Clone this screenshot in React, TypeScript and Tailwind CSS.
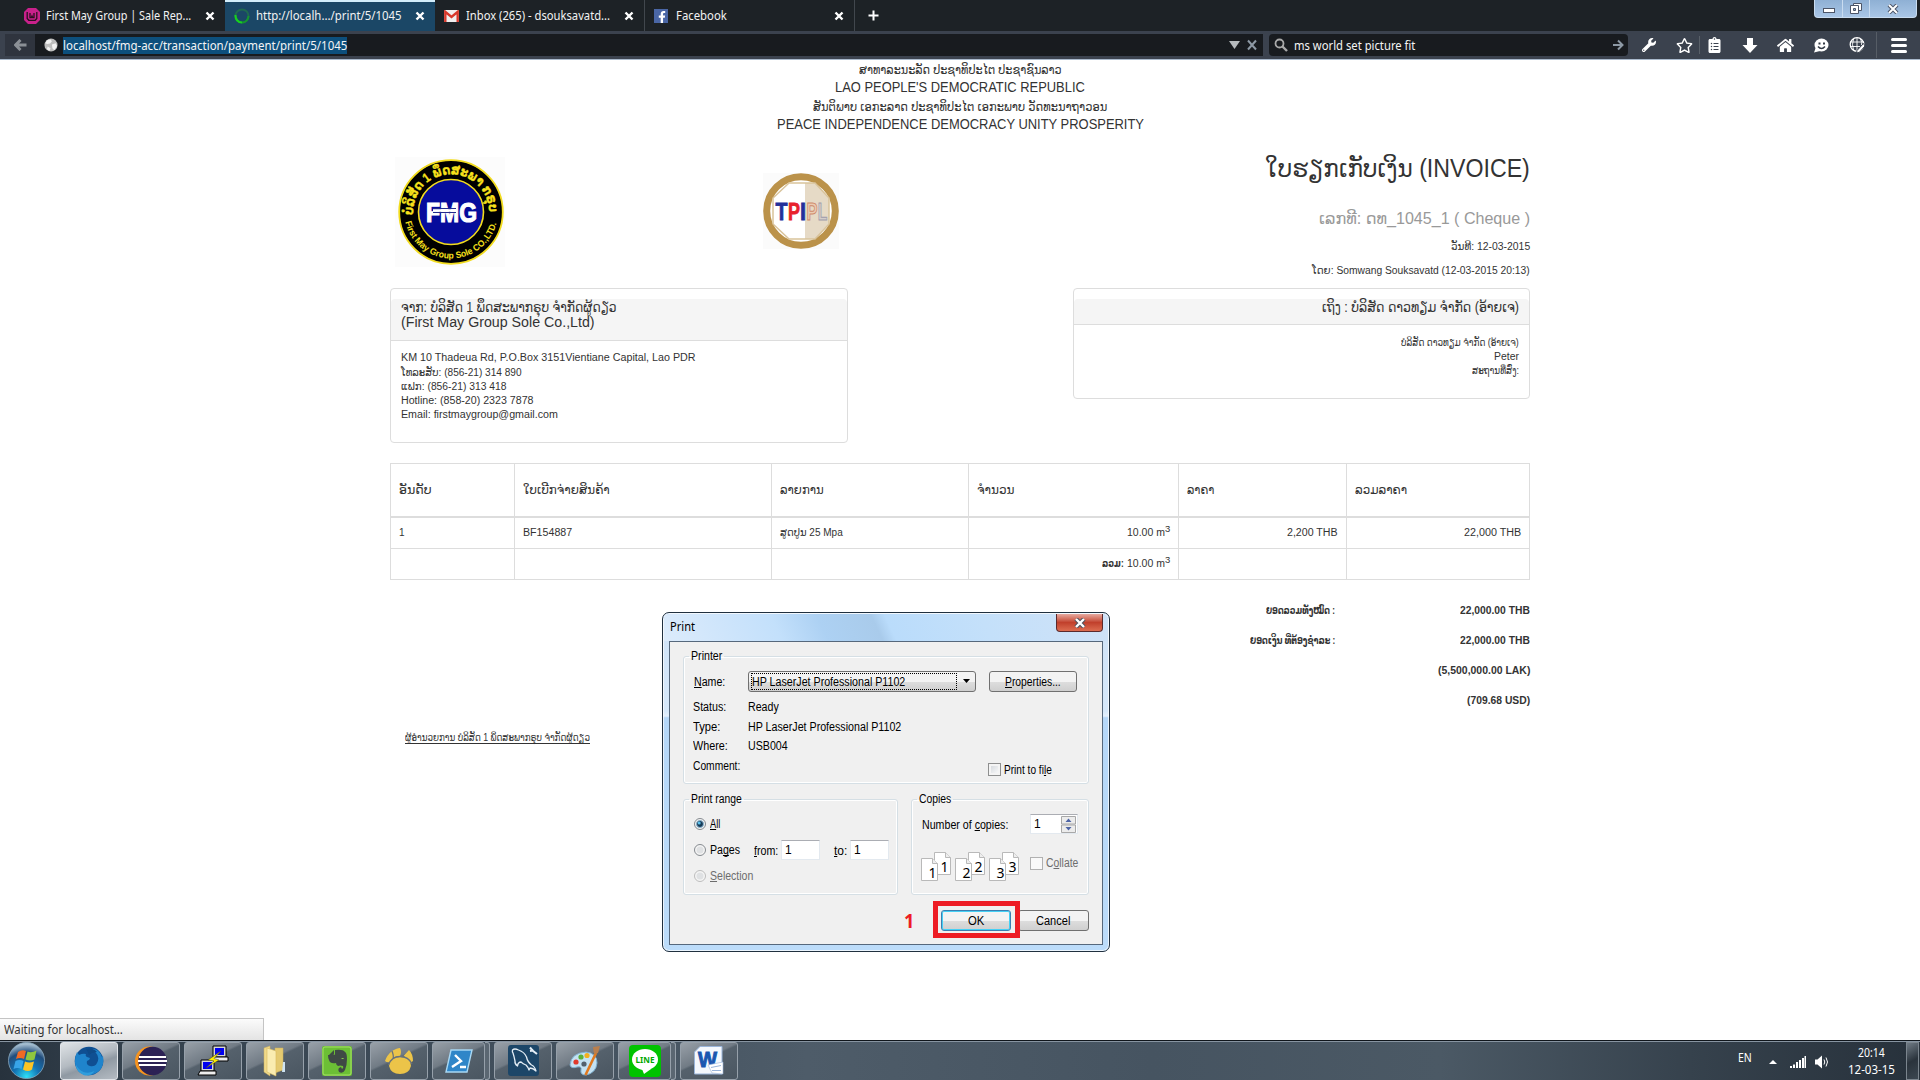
import React, { useLayoutEffect, useRef, useState } from "react";
import { FaWrench, FaRegStar, FaClipboardList, FaHome, FaFacebookF } from "react-icons/fa";

const UI = "font-['Noto_Sans','DejaVu_Sans',sans-serif]";
const DOC = "font-['Liberation_Sans','DejaVu_Sans',sans-serif]";

/** Single line of text, condensed or widened horizontally to occupy exactly `w` pixels. */
function Fit({ w, className = "", children }: { w: number; className?: string; children: React.ReactNode }) {
  const ref = useRef<HTMLSpanElement>(null);
  const [scale, setScale] = useState(1);
  useLayoutEffect(() => {
    if (ref.current && ref.current.offsetWidth > 0) setScale(w / ref.current.offsetWidth);
  }, [w]);
  return (
    <span className={`inline-block whitespace-nowrap text-left ${className}`} style={{ width: w }}>
      <span ref={ref} className="inline-block origin-left" style={{ transform: `scaleX(${scale})` }}>
        {children}
      </span>
    </span>
  );
}

const TabClose = () => (
  <svg width="10" height="10" viewBox="0 0 10 10" className="shrink-0">
    <path d="M1.5 1.5l7 7M8.5 1.5l-7 7" stroke="#fff" strokeWidth="2.4" />
  </svg>
);

function Tab({ icon, label, w, active, line }: { icon: React.ReactNode; label: string; w: number; active?: boolean; line?: boolean }) {
  return (
    <div
      className={`flex h-[31px] w-[210px] items-center pl-[9px] pr-[10px] text-[12px] text-[#f2f2f2] ${
        active ? "border-t-2 border-[#d3eefb] bg-[#1b4766] pb-[2px]" : line ? "border-r border-[#41474d]" : ""
      }`}
    >
      <span className="flex w-[22px] shrink-0 items-center">{icon}</span>
      <Fit w={w}>{label}</Fit>
      <span className="ml-auto flex">
        <TabClose />
      </span>
    </div>
  );
}

function Browser() {
  return (
    <header className={`flex flex-col ${UI}`}>
      <div className="flex h-[31px] items-center bg-[#1d2226] pl-[15px]">
        <Tab
          label="First May Group | Sale Rep..."
          w={145}
          icon={
            <svg width="16" height="16" viewBox="0 0 16 16">
              <path d="M4 0h8l4 4v8l-4 4H4l-4-4V4z" fill="#c9218b" />
              <path d="M3.2 4v6.500l1.600 1.800h6.400l1.600-1.800V4M6 5v4.500h1.400L8 8l.6 1.500H10V5" fill="none" stroke="#2a0f20" strokeWidth="1.300" />
            </svg>
          }
        />
        <Tab
          active
          label="http://localh.../print/5/1045"
          w={146}
          icon={
            <svg width="16" height="16" viewBox="0 0 16 16">
              <circle cx="8" cy="8" r="6.500" fill="none" stroke="#1f6a50" strokeWidth="2" />
              <path d="M8 14.500A6.500 6.500 0 0 1 1.600 7" fill="none" stroke="#18d020" strokeWidth="2.200" />
              <path d="M8 14.500A6.500 6.500 0 0 0 14.500 8" fill="none" stroke="#14962f" strokeWidth="2" />
            </svg>
          }
        />
        <Tab
          line
          label="Inbox (265) - dsouksavatd..."
          w={144}
          icon={
            <svg width="15" height="12" viewBox="0 0 15 12">
              <rect width="15" height="12" rx="1" fill="#f1efee" />
              <path d="M1.300 12V1.800L7.500 7l6.200-5.200V12" fill="none" stroke="#d8382b" strokeWidth="2.400" />
            </svg>
          }
        />
        <Tab
          line
          label="Facebook"
          w={51}
          icon={
            <span className="flex h-[14px] w-[14px] items-end justify-end bg-[#4a66a5] text-[12px] text-white">
              <FaFacebookF />
            </span>
          }
        />
        <svg width="11" height="11" viewBox="0 0 11 11" className="ml-[13px]">
          <path d="M5.500 0.500v10M0.500 5.500h10" stroke="#fff" strokeWidth="2" />
        </svg>
        <div className="mb-auto ml-auto mr-[3px] flex h-[18px] w-[103px] overflow-hidden rounded-b border border-t-0 border-[#c9dcf0] bg-gradient-to-b from-[#8fb0d4] to-[#a9c6e6]">
          <span className="flex w-[28px] items-center justify-center border-r border-[#c9dcf0]">
            <span className="mt-1 h-[5px] w-[12px] border border-[#4c5568] bg-white" />
          </span>
          <span className="flex w-[27px] items-center justify-center border-r border-[#c9dcf0]">
            <svg width="12" height="11" viewBox="0 0 12 11">
              <path d="M3.500.5h8v7h-8z" fill="#fff" stroke="#4c5568" />
              <path d="M.5 2.500h8v8h-8z" fill="#fff" stroke="#4c5568" />
              <path d="M3.500 5.500h2v2h-2z" fill="#8fb0d4" stroke="#4c5568" />
            </svg>
          </span>
          <span className="flex flex-1 items-center justify-center">
            <svg width="12" height="10" viewBox="0 0 12 10">
              <path d="M2 1l8 8M10 1L2 9" stroke="#4c5568" strokeWidth="4" />
              <path d="M2 1l8 8M10 1L2 9" stroke="#fff" strokeWidth="2" />
            </svg>
          </span>
        </div>
      </div>
      <div className="flex h-[29px] items-center border-b border-[#a9b9cc] bg-[#3b424e] pl-[5px] text-[12px] text-[#f4f4f4]">
        <span className="flex h-[22px] w-[30px] items-center justify-center bg-[#2f343e]">
          <svg width="13" height="12" viewBox="0 0 13 12">
            <path d="M6.500 1L1.500 6l5 5M2 6h10.500" fill="none" stroke="#8b9096" strokeWidth="3" />
          </svg>
        </span>
        <div className="flex h-[22px] w-[1228px] items-center bg-[#181b1f] pl-[9px] pr-[6px]">
          <svg width="14" height="14" viewBox="0 0 15 15" className="mr-[5px]">
            <circle cx="7.500" cy="7.500" r="7" fill="#bdbdbd" />
            <path d="M3 2.500l4-1 1.500 2-2 2.500-3 .5-2-1zM8.500 7l4-1.500 1.500 3-3 4.500-2-2zM4 9l3 2-1 3-3-2z" fill="#f2f2f2" />
          </svg>
          <span className="mt-px flex h-[17px] bg-[#0d4f7c] leading-[17px]">
            <Fit w={284}>localhost/fmg-acc/transaction/payment/print/5/1045</Fit>
          </span>
          <svg width="28" height="12" viewBox="0 0 28 12" className="ml-auto">
            <path d="M0 2h11L5.500 10z" fill="#b5b9bd" />
            <path d="M19 1.500l8 9M27 1.500l-8 9" stroke="#8d99a5" strokeWidth="2" />
          </svg>
        </div>
        <div className="ml-[6px] flex h-[22px] w-[359px] items-center rounded-sm bg-[#181b1f] pl-[5px] pr-[4px]">
          <svg width="14" height="14" viewBox="0 0 14 14" className="mr-[6px]">
            <circle cx="5.500" cy="5.500" r="4" fill="none" stroke="#a9a9a9" strokeWidth="1.800" />
            <path d="M8.500 8.500l4.500 4.500" stroke="#a9a9a9" strokeWidth="2.400" />
          </svg>
          <Fit w={121} className="pt-[2px]">ms world set picture fit</Fit>
          <svg width="12" height="12" viewBox="0 0 12 12" className="ml-auto">
            <path d="M1 6h9M6 1.500L10.500 6 6 10.500" fill="none" stroke="#8d99a5" strokeWidth="2" />
          </svg>
        </div>
        <div className="flex items-center text-white">
          <FaWrench className="ml-[14px] text-[14px]" />
          <FaRegStar className="ml-[20px] text-[17px]" />
          <span className="ml-[6px] h-[18px] w-px bg-[#596069]" />
          <FaClipboardList className="ml-[7px] w-[15px] text-[16px]" />
          <svg width="16" height="15" viewBox="0 0 16 15" className="ml-[20px]">
            <path d="M5 0h6v7h4.500L8 15 .5 7H5z" fill="#fff" />
          </svg>
          <FaHome className="ml-[19px] text-[17px]" />
          <svg width="16" height="15" viewBox="0 0 16 15" className="ml-[19px]">
            <ellipse cx="8.500" cy="7" rx="7" ry="6.500" fill="#fff" />
            <path d="M3 9L1 14.500 7 13z" fill="#fff" />
            <path d="M5.500 5.500h2M10 5.500h2" stroke="#333a45" strokeWidth="1.800" />
            <path d="M5 8.500q3.500 4 7 0" fill="none" stroke="#333a45" strokeWidth="1.500" />
          </svg>
          <svg width="16" height="16" viewBox="0 0 16 16" className="ml-[20px]">
            <circle cx="8" cy="7.500" r="6.800" fill="none" stroke="#fff" strokeWidth="1.300" />
            <path d="M1 5h14M1 9.500h10M8 1v13M4.500 2q-2 5.500 0 11M11.500 2q2 4 1 6" fill="none" stroke="#fff" strokeWidth=".9" />
            <path d="M14.500 6.500L8 13.500 7.500 16l3-.8L16 9z" fill="#fff" stroke="#3b424e" />
          </svg>
          <span className="ml-[11px] h-[26px] w-px bg-[#565d66]" />
          <span className="ml-[14px] flex w-[16px] flex-col gap-[3px]">
            <span className="h-[3px] rounded bg-white" />
            <span className="h-[3px] rounded bg-white" />
            <span className="h-[3px] rounded bg-white" />
          </span>
        </div>
      </div>
    </header>
  );
}

const FmgLogo = () => (
  <svg width="110" height="110" viewBox="0 0 110 110" className={DOC}>
    <rect width="110" height="110" fill="#fcfcfc" />
    <defs>
      <path id="arcTop" d="M18.300 60A38 38 0 1 1 93.700 60" />
      <path id="arcBottom" d="M9.500 60A46.800 46.800 0 0 0 102.500 60" />
    </defs>
    <circle cx="56" cy="55" r="51.800" fill="#000" stroke="#f2dc1e" strokeWidth="1.800" />
    <circle cx="56" cy="55" r="32.500" fill="#060c9c" stroke="#f2dc1e" strokeWidth="1.600" />
    <text fontSize="13" fontWeight="700" fill="#f7e11c" stroke="#f7e11c" strokeWidth=".4">
      <textPath href="#arcTop" startOffset="2" textLength="122" lengthAdjust="spacingAndGlyphs">
        ບໍລິສັດ 1 ພຶດສະພາ ກຣຸບ
      </textPath>
    </text>
    <text fontSize="9" fontWeight="700" fill="#f7e11c">
      <textPath href="#arcBottom" startOffset="5" textLength="125" lengthAdjust="spacingAndGlyphs">
        First May Group Sole CO.,LTD.
      </textPath>
    </text>
    <text x="31" y="64.500" fontSize="28" fontWeight="700" fill="#fff" stroke="#fff" strokeWidth="1.200" textLength="51" lengthAdjust="spacingAndGlyphs">
      FMG
    </text>
    <path d="M38 51.500h23M38 55.500h23" stroke="#222a8c" strokeWidth="1" />
    <path d="M38 53.500h23" stroke="#fff" strokeWidth="2.600" />
  </svg>
);

const TpiplLogo = () => (
  <svg width="76" height="76" viewBox="0 0 76 76" className={DOC}>
    <rect width="76" height="76" fill="#fbfbfb" />
    <circle cx="38" cy="38" r="34.300" fill="#fff" stroke="#bb924a" strokeWidth="7" />
    <path d="M42 10h10l14 15v26L52 66H42z" fill="#e6dac6" />
    <path d="M26 10h26l14 15v26L52 66H26L10 51V25z" fill="none" stroke="#d9c39b" strokeWidth="1.500" />
    <g fontSize="24" fontWeight="700">
      <text x="12.500" y="47" textLength="12" lengthAdjust="spacingAndGlyphs" fill="#23309a" stroke="#23309a" strokeWidth=".8">T</text>
      <text x="25" y="47" textLength="12" lengthAdjust="spacingAndGlyphs" fill="#e8202c" stroke="#e8202c" strokeWidth=".8">P</text>
      <text x="37" y="47" textLength="6" lengthAdjust="spacingAndGlyphs" fill="#23309a" stroke="#23309a" strokeWidth=".8">I</text>
      <text x="43.500" y="47" textLength="11" lengthAdjust="spacingAndGlyphs" fill="#ebcbb3" stroke="#cf8a6a" strokeWidth="1">P</text>
      <text x="54.800" y="47" textLength="9.500" lengthAdjust="spacingAndGlyphs" fill="#d3cdca" stroke="#9f9cab" strokeWidth="1">L</text>
    </g>
  </svg>
);

const CUBIC = (
  <>
    10.00 m<sup className="relative top-[-4px] align-baseline text-[9px] leading-none">3</sup>
  </>
);

const columns: { label: string; w: number; width: string }[] = [
  { label: "ອັນດັບ", w: 33, width: "w-[124px]" },
  { label: "ໃບເບີກຈ່າຍສິນຄ້າ", w: 87, width: "w-[257px]" },
  { label: "ລາຍການ", w: 44, width: "w-[197px]" },
  { label: "ຈຳນວນ", w: 38, width: "w-[210px]" },
  { label: "ລາຄາ", w: 27, width: "w-[168px]" },
  { label: "ລວມລາຄາ", w: 52, width: "w-[183px]" },
];

const totals = [
  { label: "ຍອດລວມທັງໝົດ :", lw: 69, value: "22,000.00 THB", w: 70 },
  { label: "ຍອດເງິນ ທີ່ຕ້ອງຊຳລະ :", lw: 85, value: "22,000.00 THB", w: 70 },
  { label: "", lw: 0, value: "(5,500,000.00 LAK)", w: 92 },
  { label: "", lw: 0, value: "(709.68 USD)", w: 63 },
];

function Invoice() {
  const cell = "border border-[#ddd] px-[8px]";
  return (
    <main className={`mx-auto flex w-[1140px] flex-col text-[10px] leading-[14px] text-[#333] ${DOC}`}>
      <div className="flex flex-col items-center pt-px text-[14px]">
        <Fit w={203} className="h-[17px] text-[13px] leading-[18px]">ສາທາລະນະລັດ ປະຊາທິປະໄຕ ປະຊາຊົນລາວ</Fit>
        <Fit w={250} className="h-[19px] leading-[18px]">LAO PEOPLE'S DEMOCRATIC REPUBLIC</Fit>
        <Fit w={294} className="h-[18px] text-[13px] leading-[20px]">ສັນຕິພາບ ເອກະລາດ ປະຊາທິປະໄຕ ເອກະພາບ ວັດທະນາຖາວອນ</Fit>
        <Fit w={367} className="h-[18px] leading-[18px]">PEACE INDEPENDENCE DEMOCRACY UNITY PROSPERITY</Fit>
      </div>

      <div className="flex h-[155px]">
        <div className="pl-[5px] pt-[24px]"><FmgLogo /></div>
        <div className="pl-[258px] pt-[40px]"><TpiplLogo /></div>
        <div className="ml-auto flex flex-col items-end pt-[19px]">
          <Fit w={265} className="text-[25px] leading-[32px]">ໃບຮຽກເກັບເງິນ (INVOICE)</Fit>
          <Fit w={211} className="mt-[23px] text-[16px] leading-[24px] text-[#999]">ເລກທີ: ດທ_1045_1 ( Cheque )</Fit>
          <Fit w={79} className="mt-[9px]">ວັນທີ: 12-03-2015</Fit>
          <Fit w={218} className="mt-[10px]">ໂດຍ: Somwang Souksavatd (12-03-2015 20:13)</Fit>
        </div>
      </div>

      <div className="flex items-start justify-between">
        <section className="flex h-[155px] w-[458px] flex-col rounded border border-[#ddd]">
          <div className="mt-[10px] flex h-[42px] flex-col rounded-t border-b border-[#ddd] bg-[#f5f5f5] px-[10px] text-[14px] leading-[15px]">
            <Fit w={216} className="pt-px">ຈາກ: ບໍລິສັດ 1 ພຶດສະພາກຣຸບ ຈຳກັດຜູ້ດຽວ</Fit>
            <Fit w={194}>(First May Group Sole Co.,Ltd)</Fit>
          </div>
          <div className="flex flex-col px-[10px] pt-[10px] leading-[14px]">
            <Fit w={295}>KM 10 Thadeua Rd, P.O.Box 3151Vientiane Capital, Lao PDR</Fit>
            <Fit w={121} className="pt-px">ໂທລະສັບ: (856-21) 314 890</Fit>
            <Fit w={105}>ແຟກ: (856-21) 313 418</Fit>
            <Fit w={133}>Hotline: (858-20) 2323 7878</Fit>
            <Fit w={157}>Email: firstmaygroup@gmail.com</Fit>
          </div>
        </section>
        <section className="flex h-[111px] w-[457px] flex-col rounded border border-[#ddd]">
          <div className="mt-[10px] flex h-[26px] flex-col items-end rounded-t border-b border-[#ddd] bg-[#f5f5f5] px-[10px] text-[14px] leading-[16px]">
            <Fit w={197}>ເຖິງ : ບໍລິສັດ ດາວທຽມ ຈຳກັດ (ອ້າຍເຈ)</Fit>
          </div>
          <div className="flex flex-col items-end px-[10px] pt-[11px]">
            <Fit w={118}>ບໍລິສັດ ດາວທຽມ ຈຳກັດ (ອ້າຍເຈ)</Fit>
            <Fit w={25}>Peter</Fit>
            <Fit w={47}>ສະຖານທີ່ສົ່ງ:</Fit>
          </div>
        </section>
      </div>

      <table className="mt-[20px] w-[1139px] table-fixed border-collapse text-left">
        <thead>
          <tr className="h-[53px]">
            {columns.map((c) => (
              <th key={c.label} className={`${cell} ${c.width} border-b-2 text-[13px] font-normal`}>
                <Fit w={c.w} className="mt-px">{c.label}</Fit>
              </th>
            ))}
          </tr>
        </thead>
        <tbody>
          <tr className="h-[32px]">
            <td className={cell}>1</td>
            <td className={cell}><Fit w={49}>BF154887</Fit></td>
            <td className={cell}><Fit w={63}>ສູດປູນ 25 Mpa</Fit></td>
            <td className={`${cell} text-right`}><Fit w={43}>{CUBIC}</Fit></td>
            <td className={`${cell} text-right`}><Fit w={51}>2,200 THB</Fit></td>
            <td className={`${cell} text-right`}><Fit w={57}>22,000 THB</Fit></td>
          </tr>
          <tr className="h-[31px]">
            <td className={cell} />
            <td className={cell} />
            <td className={cell} />
            <td className={`${cell} text-right`}>
              <span className="inline-flex items-baseline gap-[3px]">
                <b><Fit w={22}>ລວມ:</Fit></b>
                <Fit w={43}>{CUBIC}</Fit>
              </span>
            </td>
            <td className={cell} />
            <td className={cell} />
          </tr>
        </tbody>
      </table>

      <div className="mt-[16px] flex flex-col font-bold">
        {totals.map((t, i) => (
          <div key={i} className="flex h-[30px] items-center">
            <span className="flex w-[945px] justify-end">{t.label && <Fit w={t.lw}>{t.label}</Fit>}</span>
            <span className="ml-auto flex"><Fit w={t.w}>{t.value}</Fit></span>
          </div>
        ))}
      </div>
      <div className="ml-[15px] mt-[15px]">
        <Fit w={185} className="h-[13px] border-b border-[#333]">ຜູ້ອຳນວຍການ ບໍລິສັດ 1 ພຶດສະພາກຣຸບ ຈຳກັດຜູ້ດຽວ</Fit>
      </div>
    </main>
  );
}

const K = ({ children }: { children: string }) => <span className="underline decoration-1 underline-offset-[1px] [text-decoration-skip-ink:none]">{children}</span>;

function Row({ label, w, value, vw }: { label: React.ReactNode; w: number; value?: string; vw?: number }) {
  return (
    <div className="flex h-[19.500px] items-center">
      <span className="flex w-[55px]"><Fit w={w}>{label}</Fit></span>
      {value && vw ? <Fit w={vw}>{value}</Fit> : null}
    </div>
  );
}

function Radio({ on, dim }: { on?: boolean; dim?: boolean }) {
  return (
    <svg width="12" height="12" viewBox="0 0 12 12" className="mr-[4px] shrink-0">
      <circle cx="6" cy="6" r="5.500" fill="#f4f4f4" stroke={dim ? "#bcbcbc" : "#858a8f"} />
      <circle cx="6" cy="6" r="3.500" fill={on ? "#173b57" : "#dfe1e3"} stroke={on ? "#8bb4cf" : "none"} />
      {on && <circle cx="5.200" cy="5" r="1.500" fill="#5cc3ee" />}
    </svg>
  );
}

const winButton = "flex h-[21px] items-center justify-center rounded-[3px] border border-[#707070] bg-gradient-to-b from-[#f3f3f3] from-50% via-[#dedede] via-50% to-[#cfcfcf]";
const field = "flex h-[20px] items-center border border-[#e3e9ef] border-t-[#abadb3] bg-white pl-[3px]";
const group = "rounded-[3px] border border-[#d5dfe5] pl-[10px] shadow-[inset_0_0_0_1px_#fff]";

const Sheets = ({ n }: { n: string }) => (
  <svg width="31" height="30" viewBox="0 0 31 30" className={UI}>
    <path d="M13.500.5h11l5 5v17h-16z" fill="#fff" stroke="#b9b9b9" />
    <path d="M24.500.5v5h5" fill="#eee" stroke="#b9b9b9" />
    <text x="19.500" y="19.500" fontSize="14" fill="#000">{n}</text>
    <path d="M.5 6.500h11l5 5v17H.5z" fill="#fff" stroke="#b9b9b9" />
    <path d="M11.500 6.500v5h5" fill="#eee" stroke="#b9b9b9" />
    <text x="7.500" y="25.500" fontSize="14" fill="#000">{n}</text>
  </svg>
);

function PrintDialog() {
  return (
    <div className="absolute left-[662px] top-[612px] flex h-[340px] w-[448px] flex-col rounded-[7px] border border-[#20303f] bg-[linear-gradient(180deg,#cfe3f8_0%,#d6e8fa_29%,#e4f0fc_30.500%,#b5d7f8_31%,#bcdcfa_100%)] px-[6px] text-[12px] leading-[15px] text-black shadow-[inset_0_0_0_1px_rgba(255,255,255,.7)] font-['Liberation_Sans',sans-serif]">
      <div className="-mx-[5px] mt-px flex h-[27px] items-center rounded-t-[6px] bg-[linear-gradient(65deg,#dcebfb_0%,#c3e0fb_26%,#add1f3_36%,#a9cbeb_48%,#badcfb_51%,#c4e0fa_72%,#cfe2f7_100%)] pl-[6px]">
        <Fit w={25} className={`pb-[2px] text-[12px] ${UI}`}>Print</Fit>
        <span className="mb-auto ml-auto mr-[5px] flex h-[18px] w-[47px] items-center justify-center rounded-b-[4px] border border-t-0 border-[#5b2a2c] bg-gradient-to-b from-[#e6a9a0] to-[#dc6c50] via-[#c1402c] via-50%">
          <svg width="12" height="10" viewBox="0 0 12 10">
            <path d="M2 1l8 8M10 1L2 9" stroke="#50525e" strokeWidth="4.400" />
            <path d="M2 1l8 8M10 1L2 9" stroke="#fff" strokeWidth="2.400" />
          </svg>
        </span>
      </div>
      <div className="flex h-[304px] flex-col border border-[#56687c] bg-[#f0f0f0] pl-[13px] pt-[6px]">
        <fieldset className={`${group} h-[136px] w-[406px]`}>
          <legend className="-ml-[5px] h-[16px] px-[2px]"><Fit w={31} className="pt-px">Printer</Fit></legend>
          <div className="mt-[6px] flex h-[22px] items-center">
            <span className="flex w-[54px]"><Fit w={31} className="pt-[2px]"><K>N</K>ame:</Fit></span>
            <div className={`${winButton} w-[228px] pl-[2px]`}>
              <span className="flex h-[17px] w-[206px] items-center border border-dotted border-black"><Fit w={153} className="pt-[2px]">HP LaserJet Professional P1102</Fit></span>
              <svg width="7" height="4" viewBox="0 0 7 4" className="mx-auto"><path d="M0 0h7L3.500 4z" /></svg>
            </div>
            <div className={`${winButton} ml-[13px] w-[88px]`}><Fit w={56} className="pt-[2px]"><K>P</K>roperties...</Fit></div>
          </div>
          <div className="-ml-px mt-[6px]">
            <Row label="Status:" w={33} value="Ready" vw={31} />
            <Row label="Type:" w={27} value="HP LaserJet Professional P1102" vw={153} />
            <Row label="Where:" w={35} value="USB004" vw={40} />
            <div className="flex">
              <Row label="Comment:" w={47} />
              <div className="ml-[240px] flex items-center pt-[5px]">
                <span className="mr-[3px] h-[13px] w-[13px] border border-[#8e8f8f] bg-gradient-to-br from-[#cfd3d8] to-white shadow-[inset_0_0_0_2px_#f4f4f4]" />
                <Fit w={48} className="pt-px">Print to fi<K>l</K>e</Fit>
              </div>
            </div>
          </div>
        </fieldset>
        <div className="mt-[7px] flex gap-[13px]">
          <fieldset className={`${group} h-[104px] w-[215px]`}>
            <legend className="-ml-[5px] h-[16px] px-[2px]"><Fit w={51} className="pt-px">Print range</Fit></legend>
            <div className="mt-[4px] flex h-[26px] items-center"><Radio on /><Fit w={10}><K>A</K>ll</Fit></div>
            <div className="flex h-[26px] items-center">
              <Radio /><Fit w={30}>Pa<K>g</K>es</Fit>
              <Fit w={24} className="ml-[14px] pt-[2px]"><K>f</K>rom:</Fit>
              <span className={`${field} ml-[3px] w-[39px]`}>1</span>
              <Fit w={13} className="ml-[14px] pt-[2px]"><K>t</K>o:</Fit>
              <span className={`${field} ml-[3px] w-[39px]`}>1</span>
            </div>
            <div className="flex h-[26px] items-center text-[#6d6d6d]"><Radio dim /><Fit w={43}><K>S</K>election</Fit></div>
          </fieldset>
          <fieldset className={`${group} h-[104px] w-[178px]`}>
            <legend className="-ml-[5px] h-[16px] px-[2px]"><Fit w={32} className="pt-px">Copies</Fit></legend>
            <div className="mt-[4px] flex h-[26px] items-center">
              <Fit w={86} className="pt-[2px]">Number of <K>c</K>opies:</Fit>
              <span className={`${field} ml-[22px] w-[48px] justify-between pr-px`}>
                1
                <svg width="15" height="17" viewBox="0 0 15 17">
                  <path d="M.5.5h14v7.500H.5zM.5 9h14v7.500H.5z" fill="#ececec" stroke="#a8a8a8" />
                  <path d="M7.500 2.500L10.500 6h-6zM7.500 14.500l3-3.500h-6z" fill="#4d64a5" />
                </svg>
              </span>
            </div>
            <div className="mt-[15px] flex items-start">
              <span className="-ml-px flex gap-[3px]"><Sheets n="1" /><Sheets n="2" /><Sheets n="3" /></span>
              <span className="ml-[10px] mt-[4px] flex items-center text-[#6d6d6d]">
                <span className="mr-[3px] h-[13px] w-[13px] border border-[#b1b1b1] bg-[#f9f9f9]" />
                <Fit w={32}>C<K>o</K>llate</Fit>
              </span>
            </div>
          </fieldset>
        </div>
        <div className="mt-[15px] flex items-center pl-[221px]">
          <Fit w={10} className={`text-[20px] font-bold leading-[20px] text-[#ed1c24] ${UI}`}>1</Fit>
          <span className="relative ml-[27px] flex">
            <span className={`${winButton} w-[70px] !border-[#3c7fb1] pr-px shadow-[inset_0_0_0_1px_#46d0f5]`}><Fit w={16} className="pt-px">OK</Fit></span>
            <span className="absolute -left-[8px] -top-[9px] z-10 h-[37px] w-[87px] border-[5px] border-[#ed1c24]" />
          </span>
          <span className={`${winButton} ml-[7px] w-[71px] pr-[2px]`}><Fit w={34} className="pt-px">Cancel</Fit></span>
        </div>
      </div>
    </div>
  );
}

const taskIcons: { icon: React.ReactNode; active?: boolean; stack?: boolean }[] = [
  {
    active: true,
    icon: (
      <svg width="32" height="32" viewBox="0 0 32 32">
        <circle cx="16" cy="16" r="14.300" fill="#0f4f92" />
        <path d="M4 7l2 3q4-2 7-1-1 2 1 3l3 1q0 2-3 3-1 4 3 5 5 1 7-3 3-6-1-10-2-3-5-4Q26 3 29 12l1-1q2 12-7 17-9 5-17-1Q-1 19 4 7z" fill="#1f84cc" />
        <path d="M2.500 19q3 6 8 8t11-1q-4 6-11 4-7-3-8-11z" fill="#2f9ddc" />
        <path d="M13 4q7-2 11 3l-5 1-3 2q-1-3-3-6z" fill="#0e4a88" />
      </svg>
    ),
  },
  {
    icon: (
      <svg width="34" height="30" viewBox="0 0 34 30">
        <circle cx="15.500" cy="15" r="14.500" fill="#f7941e" />
        <circle cx="18.500" cy="15" r="14.300" fill="#2c2255" />
        <path d="M5 11h27M4 15h29M5 19h27" stroke="#fff" strokeWidth="1.900" />
      </svg>
    ),
  },
  {
    icon: (
      <svg width="32" height="32" viewBox="0 0 32 32">
        <path d="M16 1h13v11H16z" fill="#d6d6d6" stroke="#000" />
        <path d="M18 3h9v7h-9z" fill="#0000f0" />
        <path d="M14 16l2-4h15v4z" fill="#eee" stroke="#000" />
        <path d="M4 15h13v11H4z" fill="#d6d6d6" stroke="#000" />
        <path d="M6 17h9v7H6z" fill="#0000f0" />
        <path d="M1 30l2-4h16v4z" fill="#eee" stroke="#000" />
        <path d="M24 6L11 15l6 1-8 7 13-8-5-1.500z" fill="#ffef00" stroke="#443" strokeWidth=".5" />
      </svg>
    ),
  },
  {
    icon: (
      <svg width="24" height="32" viewBox="0 0 24 32">
        <path d="M1 3l6-2v30l-6-4z" fill="#f0d98a" stroke="#cfb25e" strokeWidth=".5" />
        <path d="M12 3h8v22l-8 3z" fill="#e5ca70" stroke="#cfb25e" strokeWidth=".5" />
        <path d="M4 3l9 3v25l-9-4z" fill="#faecb0" stroke="#d9bb5a" strokeWidth=".6" />
        <path d="M20 17h2v10h-3z" fill="#cfe4f2" />
      </svg>
    ),
  },
  {
    icon: (
      <svg width="30" height="30" viewBox="0 0 30 30">
        <rect width="30" height="30" rx="2" fill="#6cbf35" />
        <rect x="1" y="1" width="28" height="28" rx="2" fill="none" stroke="#a5e066" />
        <path d="M7 9l5-5v4q0 1-1 1z" fill="#3f4945" />
        <path d="M13 4q8-1 10 2 2 1 2 7t-2 11q-2 4-6 2-2-4 2-5l1 2q2-1 1-3-3-1-5 0-2-1-2-3-6 1-7-3-1-2-1-5h6q1 0 1-1z" fill="#3f4945" />
        <path d="M19 13q2-2 3 0z" fill="#8fd04e" />
      </svg>
    ),
  },
  {
    icon: (
      <svg width="30" height="28" viewBox="0 0 30 28">
        <path d="M16 10q11 0 11 9-2 8-11 8T5 19q0-9 11-9z" fill="#ecc449" />
        <path d="M1 14Q3 8 8 4q5-3 8-3 2 4 0 8-7 0-9 6-4 1-6-1z" fill="#ecc449" />
        <path d="M19.500 9L25 3q4 4 4 11l-3 2q-2-5-6.500-7z" fill="#ecc449" />
        <path d="M8 4q2 5 1 8M4.500 18q3-8.500 11.500-8.500T28 17" fill="none" stroke="#69727b" strokeWidth="1.300" />
      </svg>
    ),
  },
  {
    stack: true,
    icon: (
      <svg width="28" height="24" viewBox="0 0 28 24">
        <path d="M6 1h21l-5 22H1z" fill="#2f86c8" stroke="#a8d8f4" strokeWidth="1.400" />
        <path d="M10 6l6 6-9 6M15 18h6" fill="none" stroke="#fff" strokeWidth="2.400" />
      </svg>
    ),
  },
  {
    icon: (
      <svg width="31" height="31" viewBox="0 0 31 31">
        <rect width="31" height="31" rx="3" fill="#1c4668" />
        <path d="M4.500 5q2-2 6 0 6 2 8 7 1 5 5 8 3 1 4.500 6-3-3-6-3l-1 2q-1-3-3-5-3-1-5-3-3 0-3.500 4-3-2-2.500-5-1-5-2-8-1-1-.5-3z" fill="none" stroke="#e3edf5" strokeWidth="1.300" strokeLinejoin="round" />
        <path d="M22 2.500l2.500 3L29 9M22 6l3.500-.5" stroke="#e3edf5" strokeWidth="2" fill="none" />
      </svg>
    ),
  },
  {
    icon: (
      <svg width="32" height="31" viewBox="0 0 32 31">
        <path d="M1 20Q2 8 17 7q11 1 11 11-1 10-11 12-6 0-5-5 1-4-4-3-6 2-7-2z" fill="#c4e2f3" stroke="#7fb1d0" />
        <circle cx="7" cy="17" r="2.600" fill="#e03a2c" />
        <circle cx="12" cy="12" r="2.600" fill="#5bb13a" />
        <circle cx="18" cy="10.500" r="2.600" fill="#f2b01e" />
        <circle cx="15" cy="19" r="2.600" fill="#53616e" />
        <path d="M27 8L16.500 30" stroke="#e07a20" strokeWidth="2.600" />
        <path d="M25 9l-1-7 7-1-2 7z" fill="#b97f4e" />
      </svg>
    ),
  },
  {
    stack: true,
    icon: (
      <svg width="32" height="32" viewBox="0 0 32 32" className={UI}>
        <rect width="32" height="32" rx="4" fill="#00c300" />
        <ellipse cx="16" cy="14.500" rx="13" ry="10.500" fill="#fff" />
        <path d="M13 24h9l-7 5z" fill="#fff" />
        <text x="6.500" y="18" fontSize="9" fontWeight="700" fill="#00a800" textLength="19" lengthAdjust="spacingAndGlyphs">LINE</text>
      </svg>
    ),
  },
  {
    icon: (
      <svg width="30" height="30" viewBox="0 0 30 30" className={DOC}>
        <path d="M6 .5h22V28H.5V6z" fill="#f4f8fd" stroke="#9ab5da" />
        <text x="4" y="20.500" fontSize="22" fontWeight="700" fill="#1a57b0" stroke="#1a57b0" textLength="19" lengthAdjust="spacingAndGlyphs">W</text>
        <path d="M14 19l15-3v12l-11-1z" fill="#fff" stroke="#9ab5da" strokeWidth=".6" />
        <path d="M17 21.500l10-2M18 24.500h9" stroke="#9ab5da" />
      </svg>
    ),
  },
];

function Taskbar() {
  return (
    <footer className={`flex h-[40px] items-stretch border-t border-[#10161c] bg-[linear-gradient(90deg,#27323d_0%,#33404c_6%,#44525f_30%,#4e5c69_42%,#465461_60%,#4b5965_75%,#36424d_88%,#27313b_100%)] shadow-[inset_0_1px_0_#8794a1] ${UI}`}>
      <div className="flex w-[60px] items-center pl-[8px]">
        <svg width="37" height="37" viewBox="0 0 37 37">
          <defs>
            <radialGradient id="orb" cx=".5" cy=".95" r=".9">
              <stop offset="0" stopColor="#2ee0f7" />
              <stop offset=".4" stopColor="#1273b4" />
              <stop offset=".75" stopColor="#214d7c" />
              <stop offset="1" stopColor="#a3bccf" />
            </radialGradient>
          </defs>
          <circle cx="18.500" cy="18.500" r="18" fill="url(#orb)" stroke="#8aa9bf" strokeWidth=".8" />
          <path d="M10 10q4-3 8-1l-2 8q-4-2-8 0z" fill="#f06a24" />
          <path d="M19.500 9.500q4 2 9-1l-2 9q-4 2-9 0z" fill="#8fc73e" />
          <path d="M7.500 19q4-2 8 0l-2 8q-4-2-8 0z" fill="#38a5e8" />
          <path d="M17 19.500q4 2 9 0l-2 8q-4 3-9 0z" fill="#fcc424" />
        </svg>
      </div>
      {taskIcons.map((t, i) => (
        <div key={i} className="mr-[4px] flex w-[58px] pt-px">
          <div
            className={`flex flex-1 items-center justify-center rounded-[3px] border pb-px ${
              t.active
                ? "border-[#dfe3e8] bg-[linear-gradient(160deg,#dfe3e6_0%,#b3bac1_45%,#8f99a3_60%,#b5bcc3_100%)]"
                : "border-[#96a0aa] bg-[linear-gradient(155deg,#98a0a8_0%,#717b85_42%,#55616c_46%,#4a5661_100%)]"
            }`}
          >
            {t.icon}
          </div>
          {t.stack && <div className="w-[5px] rounded-r-[3px] border border-l-0 border-[#96a0aa] bg-[#5b6772]" />}
        </div>
      ))}
      <div className="ml-auto flex items-center text-[12px] text-white">
        <Fit w={14} className="mb-[5px]">EN</Fit>
        <svg width="8" height="4" viewBox="0 0 8 4" className="ml-[17px] mt-[3px]"><path d="M0 4h8L4 0z" fill="#fff" /></svg>
        <svg width="16" height="12" viewBox="0 0 16 12" className="ml-[13px] mt-[3px]">
          <path d="M0 10h2v2H0zM3 8.500h2V12H3zM6 6h2v6H6zM9 4h2v8H9zM12 2h2v10h-2zM14.500 0H16v12h-1.500z" fill="#fff" />
        </svg>
        <svg width="14" height="14" viewBox="0 0 14 14" className="ml-[9px] mt-[2px]">
          <path d="M0 4.500h2.500L7 .5v13L2.500 9.500H0z" fill="#fff" />
          <path d="M9 4.500q1.500 2.500 0 5M11 2.500q3 4.500 0 9" fill="none" stroke="#fff" />
        </svg>
        <div className="ml-[18px] flex w-[48px] flex-col items-center leading-[17px]">
          <Fit w={27}>20:14</Fit>
          <Fit w={47}>12-03-15</Fit>
        </div>
        <div className="ml-[11px] mr-px h-[38px] w-[13px] self-center border border-[#7b858e] bg-[linear-gradient(150deg,#6f7a84_0%,#2a333c_50%,#3c4751_100%)]" />
      </div>
    </footer>
  );
}

export default function App() {
  return (
    <div className="relative flex h-[1080px] w-[1920px] flex-col overflow-hidden bg-white">
      <Browser />
      <Invoice />
      <PrintDialog />
      <div className={`mt-auto flex h-[22px] w-[264px] items-center border-r border-t border-[#c4c4c4] bg-gradient-to-b from-[#fbfbfb] to-[#e4e4e4] pl-[4px] text-[12px] text-[#333] ${UI}`}>
        <Fit w={119}>Waiting for localhost...</Fit>
      </div>
      <Taskbar />
    </div>
  );
}
